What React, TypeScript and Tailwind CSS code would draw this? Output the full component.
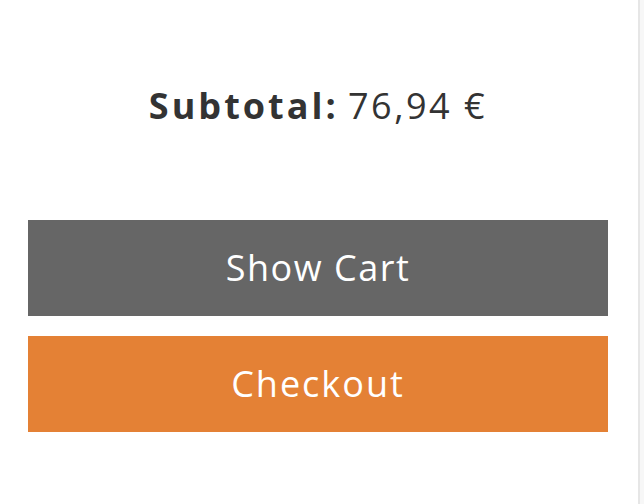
export default function App() {
  return (
    <div className="flex h-[504px] w-[644px] bg-white" style={{ fontFamily: '"Open Sans", "Liberation Sans", sans-serif' }}>
      <div className="flex flex-1 flex-col pl-7 pr-[30px]">
        <p className="mt-[82px] text-center text-[36px] leading-[48px] text-[#333333]">
          <span className="font-bold tracking-[3px]">Subtotal:</span>{' '}
          <span className="tracking-[2.5px]">76,94 €</span>
        </p>
        <button className="mt-[90px] h-24 w-full bg-[#666666] text-[36px] tracking-[1.5px] text-white">Show Cart</button>
        <button className="mt-5 h-24 w-full bg-[#e48135] text-[36px] tracking-[2px] text-white">Checkout</button>
      </div>
      <div className="w-1.5 border-l-2 border-[#e6e6e6] bg-[#f7f7f7]" />
    </div>
  );
}
